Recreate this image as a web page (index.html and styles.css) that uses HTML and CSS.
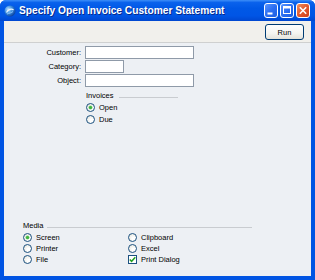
FILE: index.html
```html
<!DOCTYPE html>
<html>
<head>
<meta charset="utf-8">
<link rel="stylesheet" href="styles.css">
</head>
<body>
<div class="window">
  <div class="titlebar">
    <svg class="app-icon" width="12" height="12" viewBox="0 0 12 12">
      <defs>
        <radialGradient id="g" cx="0.35" cy="0.35" r="0.7">
          <stop offset="0" stop-color="#bfe3ff"/>
          <stop offset="0.5" stop-color="#3c8fe0"/>
          <stop offset="1" stop-color="#0b3f9c"/>
        </radialGradient>
      </defs>
      <circle cx="6" cy="6" r="5.5" fill="url(#g)"/>
      <path d="M2.5 7.5 C4 4 8 3.5 9.5 5" stroke="#e8f4ff" stroke-width="1.2" fill="none"/>
      <path d="M3 9 C5 8 7.5 8 9 6.5" stroke="#9fd0ff" stroke-width="0.8" fill="none"/>
    </svg>
    <span class="title">Specify Open Invoice Customer Statement</span>
    <div class="tbtns">
      <span class="tb"><svg width="14" height="15" viewBox="0 0 14 15"><rect x="3.5" y="9.5" width="5" height="2" fill="#fff"/></svg></span>
      <span class="tb"><svg width="14" height="15" viewBox="0 0 14 15"><rect x="3.5" y="3.5" width="7" height="7" fill="none" stroke="#fff" stroke-width="1"/><rect x="3.5" y="3.5" width="7" height="2" fill="#fff"/></svg></span>
      <span class="tb close"><svg width="14" height="15" viewBox="0 0 14 15"><path d="M3.8 4.3 L10.2 10.7 M10.2 4.3 L3.8 10.7" stroke="#fff" stroke-width="1.6"/></svg></span>
    </div>
  </div>
  <div class="frame">
    <div class="toolbar">
      <button class="run">Run</button>
    </div>
    <div class="content">
      <div class="fields">
        <label>Customer:</label><span class="input wide"></span>
        <label>Category:</label><span class="input short"></span>
        <label>Object:</label><span class="input wide"></span>
      </div>
      <div class="group invoices">
        <div class="ghead"><span>Invoices</span><span class="gline"></span></div>
        <div class="opt"><span class="radio on"></span>Open</div>
        <div class="opt"><span class="radio"></span>Due</div>
      </div>
      <div class="group media">
        <div class="ghead"><span>Media</span><span class="gline"></span></div>
        <div class="mgrid">
          <div class="opt"><span class="radio on"></span>Screen</div>
          <div class="opt"><span class="radio"></span>Clipboard</div>
          <div class="opt"><span class="radio"></span>Printer</div>
          <div class="opt"><span class="radio"></span>Excel</div>
          <div class="opt"><span class="radio"></span>File</div>
          <div class="opt"><span class="check"><svg width="9" height="9" viewBox="0 0 9 9"><path d="M1.8 4.4 L3.6 6.3 L7.3 2.3" stroke="#21a121" stroke-width="1.5" fill="none"/></svg></span>Print Dialog</div>
        </div>
      </div>
    </div>
  </div>
</div>
</body>
</html>
```

FILE: styles.css
```css
html, body {
  margin: 0;
  padding: 0;
  background: #ffffff;
}
body {
  font-family: "Liberation Sans", Arial, sans-serif;
  font-size: 7.5px;
  color: #000;
}
.window {
  width: 315px;
  height: 280px;
  display: flex;
  flex-direction: column;
  background: #0054e3;
  border-radius: 6px 6px 0 0;
  overflow: hidden;
}
.titlebar {
  height: 21px;
  flex: none;
  display: flex;
  align-items: center;
  padding: 0 5px 0 4px;
  background: linear-gradient(#3d8ef8 0%, #0a62ec 12%, #0058e6 40%, #0055e5 75%, #0047d0 100%);
}
.app-icon {
  flex: none;
  margin-top: 1px;
}
.title {
  margin-left: 3px;
  color: #fff;
  font-weight: bold;
  font-size: 10.2px;
  text-shadow: 1px 1px 0 #0a2a8a;
  white-space: nowrap;
  flex: 1;
}
.tbtns {
  display: flex;
  gap: 2px;
}
.tb {
  width: 14px;
  height: 15px;
  box-sizing: border-box;
  border: 1px solid #fff;
  border-radius: 3px;
  background: linear-gradient(135deg, #5a96ff 0%, #2b6ef2 50%, #1f5fe0 100%);
  display: flex;
  align-items: center;
  justify-content: center;
  overflow: hidden;
}
.tb svg {
  flex: none;
}
.tb.close {
  background: linear-gradient(135deg, #f0905e 0%, #e2592e 50%, #cf4119 100%);
}
.frame {
  flex: 1;
  display: flex;
  flex-direction: column;
  margin: 0 4px 4px 4px;
  background: #edf0f4;
}
.toolbar {
  height: 22px;
  flex: none;
  display: flex;
  justify-content: flex-end;
  align-items: flex-start;
  padding: 3px 7px 0 0;
  box-sizing: border-box;
  background: #f1f0ec;
  border-bottom: 1px solid #cfd0d0;
}
.run {
  width: 39px;
  height: 16px;
  padding: 0;
  margin: 0;
  border: 1px solid #003c74;
  border-radius: 3px;
  background: linear-gradient(#ffffff 0%, #f4f4f0 60%, #e3e2da 100%);
  font-family: "Liberation Sans", Arial, sans-serif;
  font-size: 7.5px;
  color: #000;
}
.content {
  flex: 1;
  display: flex;
  flex-direction: column;
  padding-top: 3px;
}
.fields {
  display: grid;
  grid-template-columns: 77px auto;
  column-gap: 4px;
  row-gap: 1px;
  align-items: center;
}
.fields label {
  text-align: right;
  line-height: 13px;
}
.input {
  display: block;
  height: 13px;
  box-sizing: border-box;
  border: 1px solid #8f9aa8;
  background: #fff;
}
.input.wide { width: 109px; }
.input.short { width: 39px; }
.group {
  display: flex;
  flex-direction: column;
}
.ghead {
  display: flex;
  align-items: center;
  line-height: 10px;
  height: 10px;
}
.gline {
  display: block;
  height: 0;
  border-top: 1px solid #c9ccd0;
  margin-left: 5px;
  margin-top: 3px;
}
.invoices {
  margin-left: 82px;
  margin-top: 4px;
}
.invoices .gline { width: 59px; }
.opt {
  display: flex;
  align-items: center;
  height: 12px;
  white-space: nowrap;
}
.radio {
  width: 9px;
  height: 9px;
  box-sizing: border-box;
  border: 1px solid #1c5180;
  border-radius: 50%;
  background: radial-gradient(circle at 65% 65%, #ffffff 20%, #e8e8e0 80%);
  margin-right: 4px;
  flex: none;
  position: relative;
}
.radio.on::after {
  content: "";
  position: absolute;
  left: 2px;
  top: 2px;
  width: 3px;
  height: 3px;
  border-radius: 50%;
  background: #3fb53f;
  box-shadow: 0 0 0 0.5px #7fd07f;
}
.check {
  width: 9px;
  height: 9px;
  box-sizing: border-box;
  border: 1px solid #1c5180;
  background: #fff;
  margin-right: 4px;
  flex: none;
  display: flex;
  align-items: center;
  justify-content: center;
}
.check svg { flex: none; }
.media {
  margin-top: auto;
  margin-left: 19px;
  padding-bottom: 11px;
}
.media .gline { width: 205px; margin-left: 4px; }
.mgrid {
  display: grid;
  grid-template-columns: 105px auto;
  margin-top: 1px;
}
.mgrid .opt { height: 11px; }
```
